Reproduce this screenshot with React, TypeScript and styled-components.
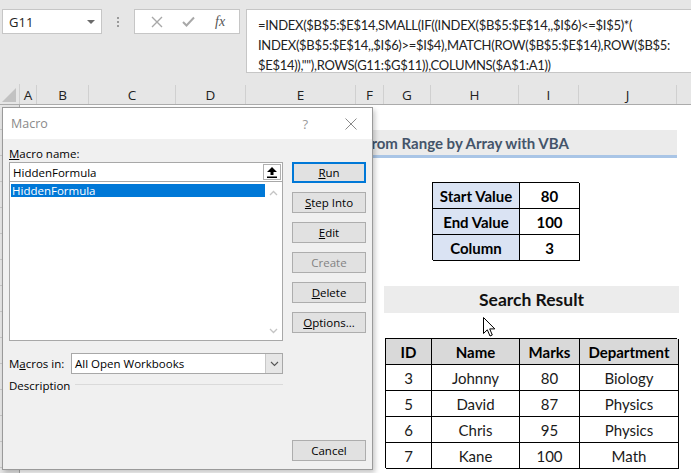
import React from "react";
import styled, { createGlobalStyle } from "styled-components";

const GlobalStyle = createGlobalStyle`
  html, body { margin: 0; padding: 0; background: #fff; }
  body { width: 691px; height: 473px; overflow: hidden; font-family: "Open Sans", "Noto Sans", sans-serif; }
  * { box-sizing: border-box; }
`;

const COLS = "20px 17px 52px 87px 70px 110px 28px 47px 88px 60px 98px 1fr";
const CELL_FONT = `"Lato", "Liberation Sans", sans-serif`;

const Screen = styled.div`
  position: relative;
  width: 691px;
  height: 473px;
  overflow: hidden;
  background: #fff;
  display: flex;
  flex-direction: column;
`;

/* ---------- top formula bar ---------- */
const TopBar = styled.div`
  height: 84px;
  flex: none;
  background: #e6e6e6;
  display: flex;
  align-items: flex-start;
  padding: 9px 0 0 2px;
`;

const NameBox = styled.div`
  width: 100px;
  height: 25px;
  background: #fff;
  border: 1px solid #c6c6c6;
  display: flex;
  align-items: center;
  justify-content: space-between;
  padding: 0 6px 0 6px;
  font-size: 13px;
  color: #222;
`;

const Caret = styled.span`
  width: 0;
  height: 0;
  border-left: 4px solid transparent;
  border-right: 4px solid transparent;
  border-top: 4px solid #6a6a6a;
`;

const Grip = styled.div`
  width: 32px;
  height: 25px;
  display: flex;
  flex-direction: column;
  align-items: center;
  justify-content: center;
  gap: 2px;
`;

const GripDot = styled.span`
  width: 2px;
  height: 2px;
  background: #9a9a9a;
`;

const FxBox = styled.div`
  width: 106px;
  height: 25px;
  background: #fff;
  border: 1px solid #c6c6c6;
  display: flex;
  align-items: center;
  justify-content: space-around;
  padding: 0 4px 0 6px;
`;

const FxText = styled.span`
  font-family: "Liberation Serif", serif;
  font-style: italic;
  font-size: 14px;
  color: #555;
`;

const FormulaBox = styled.div`
  margin-left: 6px;
  flex: 1;
  height: 64px;
  background: #fff;
  border: 1px solid #c6c6c6;
  border-right: none;
  padding: 5px 0 0 11px;
  font-family: "Lato", "Open Sans", sans-serif;
  font-size: 13px;
  letter-spacing: -0.3px;
  line-height: 20px;
  color: #222;
  white-space: pre;
`;

/* ---------- column headers ---------- */
const HeaderRow = styled.div`
  height: 21px;
  flex: none;
  display: grid;
  grid-template-columns: ${COLS};
  background: #e6e6e6;
  border-bottom: 1px solid #ababab;
`;

const ColHead = styled.div`
  display: flex;
  align-items: center;
  justify-content: center;
  font-size: 13.5px;
  color: #222;
  border-right: 1px solid #d0d0d0;
  margin-top: 1px;
`;

const Corner = styled.div`
  display: flex;
  align-items: flex-end;
  justify-content: flex-end;
  padding: 0 3px 2px 0;
  border-right: 1px solid #d0d0d0;
`;

/* ---------- sheet ---------- */
const Sheet = styled.div`
  flex: 1;
  display: grid;
  grid-template-columns: ${COLS};
  grid-template-rows: 25px repeat(14, 26px);
  font-family: ${CELL_FONT};
  color: #000;
`;

const RowHead = styled.div<{ $row: number }>`
  grid-column: 1;
  grid-row: ${(p) => p.$row};
  background: #e6e6e6;
  border-bottom: 1px solid #c8c8c8;
  border-right: 1px solid #ababab;
`;

const TitleBand = styled.div`
  grid-column: 6 / 12;
  grid-row: 2;
  align-self: start;
  height: 28px;
  background: #ebebeb;
  border-bottom: 3px solid #a9c5e6;
  display: flex;
  align-items: center;
  padding-left: 120px;
  font-weight: 700;
  font-size: 15px;
  color: #44546a;
`;

const SearchBand = styled.div`
  grid-column: 8 / 12;
  grid-row: 8;
  height: 27px;
  margin-right: -2px;
  background: #ececec;
  display: flex;
  align-items: center;
  justify-content: center;
  font-weight: 700;
  font-size: 17.5px;
  color: #111;
`;

const DataGrid = styled.div<{ $col: string; $row: string; $tpl: string }>`
  grid-column: ${(p) => p.$col};
  grid-row: ${(p) => p.$row};
  display: grid;
  grid-template-columns: ${(p) => p.$tpl};
  grid-auto-rows: 26px;
  border-top: 1px solid #000;
  border-left: 1px solid #000;
  margin-left: 1px;
`;

const Cell = styled.div<{ $bg?: string; $bold?: boolean }>`
  display: flex;
  align-items: center;
  justify-content: center;
  border-right: 1px solid #000;
  border-bottom: 1px solid #000;
  background: ${(p) => p.$bg || "#fff"};
  font-weight: ${(p) => (p.$bold ? 700 : 400)};
  font-size: 15px;
  color: ${(p) => (p.$bold ? "#000" : "#1a1a1a")};
`;

const Cursor = styled.svg`
  position: absolute;
  left: 483px;
  top: 317px;
`;

/* ---------- macro dialog ---------- */
const Dialog = styled.div`
  position: absolute;
  left: 2px;
  top: 107px;
  width: 371px;
  height: 363px;
  border: 1px solid #9a9a9a;
  background: #f0f0f0;
  display: flex;
  flex-direction: column;
  box-shadow: 2px 3px 5px rgba(0, 0, 0, 0.22);
  font-family: "Open Sans", "Noto Sans", sans-serif;
  font-size: 11.5px;
  color: #000;
`;

const TitleBar = styled.div`
  height: 31px;
  flex: none;
  background: #fff;
  display: flex;
  align-items: center;
  padding: 0 15px 0 8px;
  font-size: 12.5px;
  color: #8a8a8a;
`;

const TitleText = styled.span`
  flex: 1;
`;

const Help = styled.span`
  margin-right: 37px;
  font-size: 13px;
  color: #9a9a9a;
`;

const Body = styled.div`
  flex: 1;
  display: flex;
  gap: 9px;
  padding: 7px 6px 8px 6px;
`;

const LeftPane = styled.div`
  width: 274px;
  display: flex;
  flex-direction: column;
`;

const Label = styled.div`
  height: 16px;
  line-height: 16px;
  white-space: nowrap;
`;

const NameInput = styled.div`
  height: 20px;
  background: #fff;
  border: 1px solid #a8a8a8;
  display: flex;
  align-items: center;
  padding: 0 1px 0 3px;
`;

const InputText = styled.span`
  flex: 1;
`;

const UpButton = styled.div`
  width: 18px;
  height: 16px;
  background: #fff;
  border: 1px solid #b0b0b0;
  display: flex;
  align-items: center;
  justify-content: center;
`;

const ListBox = styled.div`
  height: 160px;
  margin-top: -1px;
  background: #fff;
  border: 1px solid #a8a8a8;
  display: flex;
  padding: 2px 0 2px 1px;
`;

const ListItems = styled.div`
  flex: 1;
`;

const ListItem = styled.div<{ $selected?: boolean }>`
  height: 13px;
  line-height: 13px;
  padding-left: 1px;
  background: ${(p) => (p.$selected ? "#0078d7" : "transparent")};
  color: ${(p) => (p.$selected ? "#fff" : "#000")};
`;

const ScrollBar = styled.div`
  width: 17px;
  display: flex;
  flex-direction: column;
  justify-content: space-between;
  align-items: center;
  padding: 6px 0 4px;
`;

const FieldRow = styled.div`
  margin-top: 12px;
  height: 21px;
  display: flex;
  align-items: center;
`;

const FieldLabel = styled.span`
  width: 62px;
  flex: none;
`;

const Select = styled.div`
  flex: 1;
  height: 21px;
  background: #fff;
  border: 1px solid #a8a8a8;
  display: flex;
  align-items: center;
  padding-left: 3px;
`;

const SelectText = styled.span`
  flex: 1;
`;

const SelectButton = styled.div`
  width: 17px;
  height: 19px;
  background: #e6e6e6;
  border-left: 1px solid #c8c8c8;
  display: flex;
  align-items: center;
  justify-content: center;
`;

const DescRow = styled.div`
  margin-top: 3px;
  height: 16px;
  display: flex;
  align-items: center;
`;

const DescLine = styled.div`
  flex: 1;
  height: 1px;
  margin-left: 5px;
  margin-top: -1px;
  background: #dadada;
`;

const RightPane = styled.div`
  width: 74px;
  display: flex;
  flex-direction: column;
  gap: 9px;
  padding-top: 16px;
`;

const Btn = styled.div<{ $primary?: boolean; $disabled?: boolean; $push?: boolean }>`
  height: 21px;
  flex: none;
  display: flex;
  align-items: center;
  justify-content: center;
  background: #e1e1e1;
  border: ${(p) => (p.$primary ? "2px solid #0078d7" : "1px solid #adadad")};
  color: ${(p) => (p.$disabled ? "#838383" : "#000")};
  margin-top: ${(p) => (p.$push ? "auto" : "0")};
`;

const Chevron = ({ up }: { up?: boolean }) => (
  <svg width="9" height="6" viewBox="0 0 9 6">
    <path
      d={up ? "M1 5 L4.5 1.5 L8 5" : "M1 1 L4.5 4.5 L8 1"}
      fill="none"
      stroke="#c4c4c4"
      strokeWidth="1.3"
    />
  </svg>
);

const ROWS = Array.from({ length: 15 }, (_, i) => i + 1);

const results = [
  ["3", "Johnny", "80", "Biology"],
  ["5", "David", "87", "Physics"],
  ["6", "Chris", "95", "Physics"],
  ["7", "Kane", "100", "Math"],
];

export default function App() {
  return (
    <>
      <GlobalStyle />
      <Screen>
        <TopBar>
          <NameBox>
            <span>G11</span>
            <Caret />
          </NameBox>
          <Grip>
            <GripDot />
            <GripDot />
            <GripDot />
          </Grip>
          <FxBox>
            <svg width="12" height="12" viewBox="0 0 12 12">
              <path d="M1 1 L11 11 M11 1 L1 11" stroke="#a8a8a8" strokeWidth="1.4" />
            </svg>
            <svg width="13" height="11" viewBox="0 0 13 11">
              <path d="M1 6 L4.5 9.5 L12 1.5" fill="none" stroke="#a8a8a8" strokeWidth="2" />
            </svg>
            <FxText>fx</FxText>
          </FxBox>
          <FormulaBox>
            {"=INDEX($B$5:$E$14,SMALL(IF((INDEX($B$5:$E$14,,$I$6)<=$I$5)*(\nINDEX($B$5:$E$14,,$I$6)>=$I$4),MATCH(ROW($B$5:$E$14),ROW($B$5:\n$E$14)),\"\"),ROWS(G11:$G$11)),COLUMNS($A$1:A1))"}
          </FormulaBox>
        </TopBar>

        <HeaderRow>
          <Corner>
            <svg width="14" height="14" viewBox="0 0 14 14">
              <path d="M14 0 L14 14 L0 14 Z" fill="#c2c2c2" />
            </svg>
          </Corner>
          {["A", "B", "C", "D", "E", "F", "G", "H", "I", "J"].map((c) => (
            <ColHead key={c}>{c}</ColHead>
          ))}
          <div />
        </HeaderRow>

        <Sheet>
          {ROWS.map((r) => (
            <RowHead key={r} $row={r} />
          ))}
          <TitleBand>from Range by Array with VBA</TitleBand>

          <DataGrid $col="9 / 11" $row="4 / 7" $tpl="87px 60px">
            <Cell $bg="#dae3f3" $bold>Start Value</Cell>
            <Cell $bold>80</Cell>
            <Cell $bg="#dae3f3" $bold>End Value</Cell>
            <Cell $bold>100</Cell>
            <Cell $bg="#dae3f3" $bold>Column</Cell>
            <Cell $bold>3</Cell>
          </DataGrid>

          <SearchBand>Search Result</SearchBand>

          <DataGrid $col="8 / 12" $row="10 / 15" $tpl="46px 88px 60px 99px">
            {["ID", "Name", "Marks", "Department"].map((h) => (
              <Cell key={h} $bg="#d9d9d9" $bold>
                {h}
              </Cell>
            ))}
            {results.map((row) =>
              row.map((v, i) => <Cell key={row[0] + i}>{v}</Cell>)
            )}
          </DataGrid>
        </Sheet>

        <Dialog>
          <TitleBar>
            <TitleText>Macro</TitleText>
            <Help>?</Help>
            <svg width="12" height="12" viewBox="0 0 12 12">
              <path d="M0.5 0.5 L11.5 11.5 M11.5 0.5 L0.5 11.5" stroke="#8a8a8a" strokeWidth="1" />
            </svg>
          </TitleBar>
          <Body>
            <LeftPane>
              <Label>
                <u>M</u>acro name:
              </Label>
              <NameInput>
                <InputText>HiddenFormula</InputText>
                <UpButton>
                  <svg width="10" height="11" viewBox="0 0 10 11">
                    <path d="M5 0 L10 5 L6.5 5 L6.5 8 L3.5 8 L3.5 5 L0 5 Z" fill="#000" />
                    <rect x="0" y="9.5" width="10" height="1.5" fill="#000" />
                  </svg>
                </UpButton>
              </NameInput>
              <ListBox>
                <ListItems>
                  <ListItem $selected>HiddenFormula</ListItem>
                </ListItems>
                <ScrollBar>
                  <Chevron up />
                  <Chevron />
                </ScrollBar>
              </ListBox>
              <FieldRow>
                <FieldLabel>
                  M<u>a</u>cros in:
                </FieldLabel>
                <Select>
                  <SelectText>All Open Workbooks</SelectText>
                  <SelectButton>
                    <svg width="9" height="6" viewBox="0 0 9 6">
                      <path d="M1 1 L4.5 4.5 L8 1" fill="none" stroke="#555" strokeWidth="1.1" />
                    </svg>
                  </SelectButton>
                </Select>
              </FieldRow>
              <DescRow>
                <span>Description</span>
                <DescLine />
              </DescRow>
            </LeftPane>
            <RightPane>
              <Btn $primary>
                <span>
                  <u>R</u>un
                </span>
              </Btn>
              <Btn>
                <span>
                  <u>S</u>tep Into
                </span>
              </Btn>
              <Btn>
                <span>
                  <u>E</u>dit
                </span>
              </Btn>
              <Btn $disabled>Create</Btn>
              <Btn>
                <span>
                  <u>D</u>elete
                </span>
              </Btn>
              <Btn>
                <span>
                  <u>O</u>ptions...
                </span>
              </Btn>
              <Btn $push>Cancel</Btn>
            </RightPane>
          </Body>
        </Dialog>

        <Cursor width="13" height="21" viewBox="0 0 13 21">
          <path
            d="M0.5 0.5 L0.5 16.5 L4.3 12.8 L7 19 L9.3 18 L6.7 11.9 L11.8 11.9 Z"
            fill="#fff"
            stroke="#000"
            strokeWidth="1"
            strokeLinejoin="round"
          />
        </Cursor>
      </Screen>
    </>
  );
}
